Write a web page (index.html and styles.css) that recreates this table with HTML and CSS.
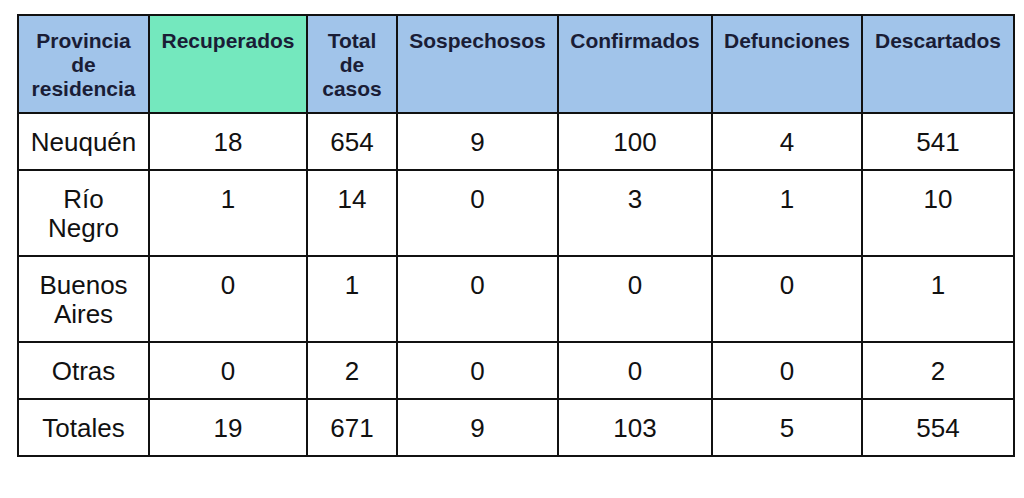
FILE: index.html
```html
<!DOCTYPE html>
<html lang="es">
<head>
<meta charset="utf-8">
<title>Casos por provincia de residencia</title>
<link rel="stylesheet" href="styles.css">
</head>
<body>
<div class="page">
<table class="stats">
  <colgroup>
    <col class="c-prov">
    <col class="c-rec">
    <col class="c-tot">
    <col class="c-sos">
    <col class="c-conf">
    <col class="c-def">
    <col class="c-desc">
  </colgroup>
  <thead>
    <tr>
      <th>Provincia<br>de<br>residencia</th>
      <th class="green">Recuperados</th>
      <th>Total<br>de<br>casos</th>
      <th>Sospechosos</th>
      <th>Confirmados</th>
      <th>Defunciones</th>
      <th>Descartados</th>
    </tr>
  </thead>
  <tbody>
    <tr><td>Neuquén</td><td>18</td><td>654</td><td>9</td><td>100</td><td>4</td><td>541</td></tr>
    <tr><td>Río<br>Negro</td><td>1</td><td>14</td><td>0</td><td>3</td><td>1</td><td>10</td></tr>
    <tr><td>Buenos<br>Aires</td><td>0</td><td>1</td><td>0</td><td>0</td><td>0</td><td>1</td></tr>
    <tr><td>Otras</td><td>0</td><td>2</td><td>0</td><td>0</td><td>0</td><td>2</td></tr>
    <tr><td>Totales</td><td>19</td><td>671</td><td>9</td><td>103</td><td>5</td><td>554</td></tr>
  </tbody>
</table>
</div>
</body>
</html>
```

FILE: styles.css
```css
html, body {
  margin: 0;
  padding: 0;
  background: #ffffff;
}

.page {
  padding: 14px 0 0 17px;
  font-family: "Liberation Sans", Arial, sans-serif;
}

.stats {
  border-collapse: collapse;
  table-layout: fixed;
  width: 998px;
  border: 2px solid #111111;
}

.c-prov { width: 131px; }
.c-rec { width: 158px; }
.c-tot { width: 90px; }
.c-sos { width: 161px; }
.c-conf { width: 154px; }
.c-def { width: 150px; }
.c-desc { width: 152px; }

.stats th,
.stats td {
  border: 2px solid #111111;
  text-align: center;
  vertical-align: top;
  padding: 0;
}

.stats th {
  background: #a1c4ea;
  color: #1a1d36;
  font-weight: bold;
  font-size: 21px;
  line-height: 24px;
  padding: 13px 2px 11px;
  height: 72px;
}

.stats th.green {
  background: #74e8be;
}

.stats td {
  color: #111111;
  font-size: 26px;
  line-height: 29px;
  padding: 14px 2px 12px;
}
```
